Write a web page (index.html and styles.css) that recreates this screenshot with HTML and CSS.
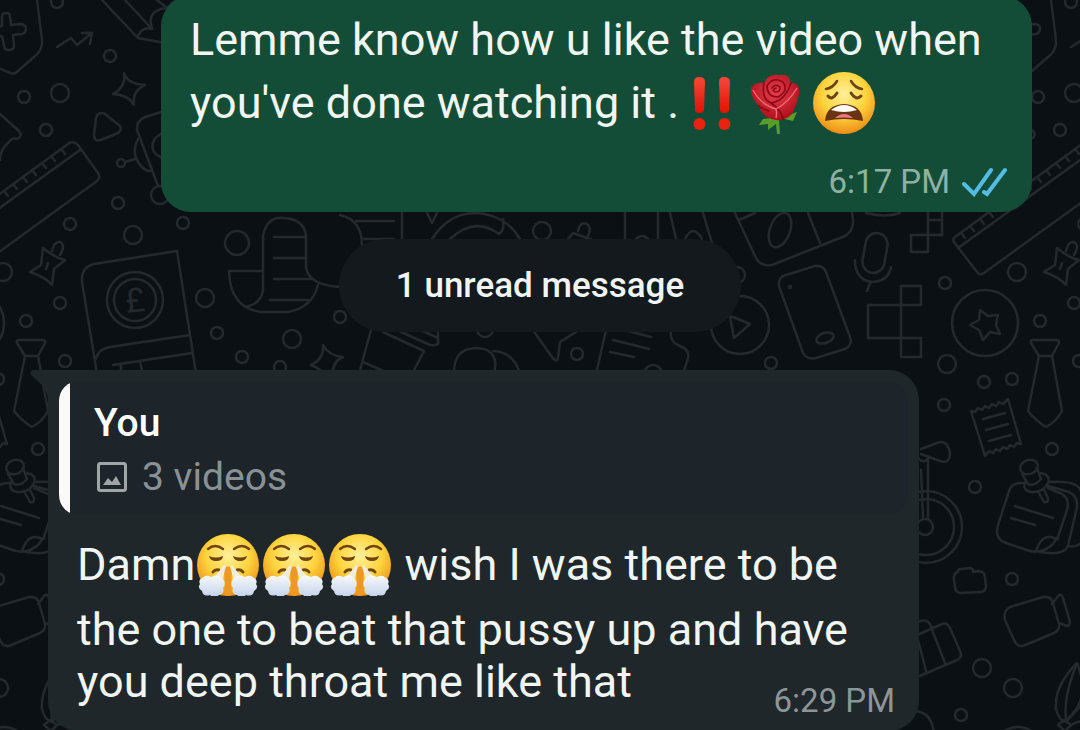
FILE: index.html
```html
<!DOCTYPE html>
<html lang="en">
<head>
    <meta charset="UTF-8">
    <meta name="viewport" content="width=device-width, initial-scale=1.0">
    <title>Chat</title>
    <link rel="stylesheet" href="styles.css">
</head>
<body>
    <!-- Shared drawings -->
    <svg class="defs" width="0" height="0" aria-hidden="true">
        <defs>
            <radialGradient id="faceFill" cx="50%" cy="35%" r="65%">
                <stop offset="0" stop-color="#fff09a"/>
                <stop offset="0.55" stop-color="#fdd43c"/>
                <stop offset="1" stop-color="#ee8d17"/>
            </radialGradient>
            <linearGradient id="redFill" x1="0" y1="0" x2="0" y2="1">
                <stop offset="0" stop-color="#f5483a"/>
                <stop offset="1" stop-color="#df1204"/>
            </linearGradient>
            <radialGradient id="roseFill" cx="50%" cy="40%" r="60%">
                <stop offset="0" stop-color="#e4404c"/>
                <stop offset="1" stop-color="#b00c1b"/>
            </radialGradient>
            <linearGradient id="steamFill" x1="0" y1="0" x2="0" y2="1">
                <stop offset="0" stop-color="#f8fafd"/>
                <stop offset="1" stop-color="#c3d2ea"/>
            </linearGradient>
        </defs>
        <symbol id="steamFace" viewBox="0 0 62 62">
            <circle cx="31" cy="31" r="31" fill="url(#faceFill)"/>
            <g fill="none" stroke="#70430f" stroke-width="2" stroke-linecap="round">
                <path d="M11 15Q18 9 26 15M37 15Q45 9 52 15" stroke-width="2.4"/>
                <path d="M16 38Q18 35 22 36M46 38Q44 35 40 36" stroke-width="3"/>
            </g>
            <path d="M12 22Q19 25 26 22Q26 27 19 27Q13 27 12 22zM36 22Q43 25 50 22Q49 27 43 27Q37 27 36 22z" fill="#70430f"/>
            <path d="M27 34Q31 31 35 34L34 61Q31 63 28 61z" fill="#ed9824"/>
            <path d="M27 31L29 33L25 46L15 46zM35 31L33 33L37 46L47 46z" fill="#edf0f5" opacity="0.85"/>
            <path d="M5 44Q9 40 14 43Q21 39 25 44Q30 49 26 54Q28 60 22 61Q17 65 13 61Q6 63 5 57Q0 54 3 50Q1 46 5 44z" fill="url(#steamFill)"/>
            <path d="M57 44Q53 40 48 43Q41 39 37 44Q32 49 36 54Q34 60 40 61Q45 65 49 61Q56 63 57 57Q62 54 59 50Q61 46 57 44z" fill="url(#steamFill)"/>
        </symbol>
        <symbol id="wearyFace" viewBox="0 0 62 62">
            <circle cx="31" cy="31" r="31" fill="url(#faceFill)"/>
            <g fill="none" stroke="#70430f" stroke-width="2.6" stroke-linecap="round">
                <path d="M13 17Q20 16 24 9M38 9Q42 16 49 17"/>
                <path d="M15 24Q19 29 24 21M38 21Q43 29 48 24" stroke-width="3"/>
            </g>
            <path d="M12 49Q13 33 31 32Q49 33 50 49Q31 45 12 49z" fill="#6b3312"/>
            <path d="M18 38Q31 28 44 38Q31 42 18 38z" fill="#fffaf2"/>
            <path d="M22 46Q31 38 40 46Q31 45 22 46z" fill="#e9788b"/>
        </symbol>
        <symbol id="rose" viewBox="0 0 62 62">
            <path d="M26 46L32 48L33 62L30 62L29 52L21 58L21 52L12 53L16 47zM34 46L50 40L46 49L38 47z" fill="#589d2b"/>
            <path d="M4 16Q8 10 17 11Q21 1 33 3Q42 1 44 11Q54 11 52 22Q50 32 45 42Q38 49 29 48Q15 46 12 34Q3 25 4 16z" fill="url(#roseFill)"/>
            <g fill="none" stroke="#8b0815" stroke-width="1.6" stroke-linecap="round">
                <path d="M17 11Q14 27 24 31Q38 29 44 11"/>
                <path d="M20 14Q26 4 36 10Q42 19 31 25Q20 25 20 14z"/>
                <path d="M25 16Q28 11 33 15Q34 20 28 20Q24 18 29 16"/>
                <path d="M24 31Q34 38 36 47M12 34Q16 37 22 39"/>
            </g>
            <path d="M6 18Q14 33 29 37Q42 30 50 16M29 37Q30 42 29 46" fill="none" stroke="#ef7278" stroke-width="1.3"/>
        </symbol>
        <symbol id="doubleBang" viewBox="0 0 62 62">
            <path d="M13 10Q13 5 18 5Q24 5 24 10L23 38Q23 41 18 41Q14 41 14 38zM38 10Q38 5 43 5Q49 5 49 10L48 38Q48 41 43 41Q39 41 39 38z" fill="url(#redFill)"/>
            <circle cx="18.500" cy="52" r="6" fill="#e8230f"/>
            <circle cx="43.500" cy="52" r="6" fill="#e8230f"/>
        </symbol>
        <g id="doodles">
            <path d="M37 0L42 40Q43 50 34 57L18 71Q14 75 10 73L-6 66"/>
            <path d="M2 17Q2 13 6 13Q10 13 10 17L11 25L20 24Q25 24 26 28Q26 33 22 34L13 35L14 46Q14 50 9 50Q4 50 4 46L2 36L-8 37L-9 28L2 26z"/>
            <path d="M57 47L71 38L77 45L92 33M82 33L92 33L90 44"/>
            <path d="M124 73Q127 84 145 85Q132 91 134 105Q129 95 113 94Q126 87 124 73z"/>
            <path d="M96 118Q98 111 105 114L119 125Q123 129 118 133L101 140Q94 142 94 135z"/>
            <path d="M0 114L19 131Q23 136 17 139Q12 137 8 143Q0 150 0 160"/>
            <path d="M-59 237L68 144Q73 140 78 145L98 173Q101 177 97 181L-30 273Q-34 276 -37 272L-60 242Q-62 239 -59 237zM-56 248L80 150"/>
            <path d="M61 149l4 5M51 156l4 5M42 163l4 5M32 170l4 5M23 177l4 5M13 184l4 5M4 191l4 5M-6 198l4 5M-15 205l4 5M-25 212l4 5M-34 219l4 5M-44 226l4 5M-53 233l4 5"/>
            <path d="M102 0L138 38L165 43M125 0L152 29M138 36Q143 26 152 29M152 28Q146 10 167 8M157 0L167 8L175 0"/>
            <path d="M165 111L145 117Q136 121 137 130L158 186M138 139Q130 155 142 167Q146 171 150 171M125 162L135 159M164 132Q148 140 154 152Q158 157 164 158"/>
            <path d="M43 248Q55 258 65 260L54 269L52 285Q45 277 30 272L41 265zM52 251Q54 241 60 242Q66 245 60 255M48 263L46 269"/>
            <path d="M98 380L82 282Q81 267 94 264L177 251L197 380M96 359Q98 349 110 347L190 335M113 365L192 353M121 364v10M140 361l2 10"/>
            <circle cx="135" cy="300" r="28"/><circle cx="135" cy="300" r="21"/>
            <path d="M19 340Q16 340 17 343L25 356L38 356L45 343Q46 340 42 340zM25 356L14 411Q22 421 32 427Q42 422 48 411L38 356"/>
            <path d="M263 290V236Q267 216 284 218Q304 219 306 236V268Q310 286 342 287M263 271H229Q230 308 261 312H288Q312 308 318 285M263 290Q261 304 245 307"/>
            <path d="M274 237h31M274 258h31M274 279h37M270 300h38M356 221h38M364 239h30"/>
            <path d="M323 345Q329 356 343 357Q333 361 332 375M323 345Q324 359 311 365Q322 369 323 375"/>
            <path d="M340 215Q362 220 362 245M402 213v26M427 213l5 10l5-10M432 239Q449 213 475 213Q505 214 520 239M450 239Q475 216 499 234Q505 230 503 219"/>
            <path d="M568 239l5-6L595 241M578 231Q580 221 587 224Q592 228 588 236M625 213v26M658 213v26M636 239Q642 233 648 239M670 213l7 30M703 213l9 30M685 239Q693 223 702 239"/>
            <path d="M371 330L359 374M383 332L424 351L412 374M397 330L430 345Q440 347 438 338L395 318M363 362L390 374M438 330v14"/>
            <path d="M454 374Q453 348 477 348Q500 349 494 374M493 351Q514 352 520 374M530 326L552 357Q557 364 558 357L560 342L576 332M606 330L596 374M613 340l36 9M610 352l24 5M628 331l23 6M671 330Q669 342 680 346Q690 350 688 358L683 374"/>
            <path d="M730 317Q730 316 733 317L750 324L734 338zM735 213L755 256Q760 267 772 265L845 236Q856 230 852 213M739 220L755 213M808 213L820 243M866 213Q886 218 900 213"/>
            <circle cx="740" cy="325" r="29"/>
            <ellipse cx="780" cy="230" rx="10" ry="18" transform="rotate(20 780 230)"/>
            <path d="M779 286Q778 277 786 275L815 266Q823 265 826 272L850 337Q853 345 845 349L816 358Q807 360 803 353z"/>
            <circle cx="790" cy="287" r="1"/>
            <ellipse cx="825" cy="338" rx="9" ry="5" transform="rotate(-18 825 338)"/>
            <rect x="864" y="233" width="22" height="40" rx="11" transform="rotate(10 875 253)"/>
            <path d="M855 260Q855 280 872 282Q889 281 891 267M870 283L867 291"/>
            <path d="M911 235h17v17h-17zM928 205v30h14v-30M928 220h14M901 286h20v19h-20zM901 305h-33v33h33zM901 338h20v19h-20z"/>
            <circle cx="985" cy="323" r="33"/>
            <path d="M980 310L988 316L998 315L996 325L1000 334L990 332L983 340L979 330L970 325L979 320z"/>
            <path d="M971 411l4 1l3-4l4 2l3-4l4 2l3-4l4 2l3-4l4 2l5-5L1021 444l-4-1l-3 4l-4-2l-3 4l-4-2l-3 4l-4-2l-3 4l-4-2l-4 5zM983 419l22-6M986 430l22-6M989 441l22-6"/>
            <path d="M921 449L940 442Q948 441 950 453Q950 464 940 461L921 454M918 458Q924 465 929 457M928 457v62M921 470l2 48"/>
            <circle cx="926" cy="527" r="36"/><circle cx="926" cy="527" r="28"/><circle cx="925" cy="527" r="8"/>
            <path d="M1024 483Q1012 482 1009 491L998 525Q994 539 1006 543L1030 551Q1041 554 1052 545L1058 537L1067 510Q1070 499 1062 494L1048 488M1036 551Q1041 536 1050 537L1058 539M1040 552Q1064 556 1068 546L1077 507Q1078 496 1069 492L1048 486M1050 482Q1075 480 1080 489L1092 515Q1087 550 1068 546M1015 506l38 12M1011 518l24 7"/>
            <ellipse cx="1029" cy="467" rx="9" ry="7" transform="rotate(-20 1029 467)"/>
            <path d="M1022 474l6 10Q1034 487 1041 479L1037 468M1026 480Q1021 490 1031 492Q1043 493 1048 483Q1051 475 1041 473M1039 493l5 9Q1049 503 1048 498L1044 490"/>
            <path d="M954 580Q953 573 958 572Q957 569 961 569L970 568Q974 569 973 572L979 571Q985 572 985 577L986 587Q985 592 980 592L960 593Q955 592 955 587z"/>
            <path d="M1010 607L1043 597Q1051 596 1053 603L1059 624Q1060 630 1054 633L1023 646Q1017 647 1014 640L1005 620Q1003 611 1010 607zM1052 604L1059 595Q1062 594 1063 598L1070 622Q1070 626 1067 626L1059 623"/>
            <path d="M915 636L942 624Q947 622 950 628L960 651Q963 657 957 660L915 678M931 627L945 663M918 640l8 31M918 622Q928 617 932 628M915 711Q932 712 934 734"/>
            <path d="M1077 663Q1054 686 1056 709Q1059 721 1066 722M1077 663Q1063 697 1066 720Q1092 700 1077 663M1066 722L1085 701M1064 720l7 5-6 6-7-6zM1070 726Q1080 718 1090 724M1000 734Q1018 720 1036 734"/>
            <g class="dots">
                <circle cx="57" cy="2" r="6"/><circle cx="110" cy="56" r="6"/><circle cx="24" cy="97" r="6"/><circle cx="60" cy="93" r="9"/>
                <circle cx="46" cy="130" r="6"/><circle cx="121" cy="163" r="4"/><circle cx="160" cy="195" r="9"/><circle cx="118" cy="203" r="6"/>
                <circle cx="70" cy="224" r="6"/><circle cx="133" cy="235" r="9"/><circle cx="183" cy="223" r="6"/><circle cx="3" cy="272" r="9"/>
                <circle cx="237" cy="243" r="12"/><circle cx="60" cy="303" r="6"/><circle cx="26" cy="321" r="6"/><circle cx="65" cy="361" r="6"/>
                <circle cx="205" cy="298" r="9"/><circle cx="217" cy="333" r="6"/><circle cx="242" cy="357" r="6"/><circle cx="292" cy="339" r="9"/>
                <circle cx="340" cy="317" r="6"/><circle cx="280" cy="367" r="6"/><circle cx="542" cy="231" r="9"/><circle cx="485" cy="329" r="8"/>
                <circle cx="577" cy="354" r="6"/><circle cx="653" cy="374" r="9"/><circle cx="737" cy="275" r="8"/><circle cx="771" cy="363" r="6"/>
                <circle cx="945" cy="283" r="6"/><circle cx="947" cy="364" r="9"/><circle cx="984" cy="382" r="6"/><circle cx="1012" cy="379" r="6"/>
                <circle cx="944" cy="405" r="6"/><circle cx="1052" cy="449" r="6"/><circle cx="975" cy="487" r="6"/><circle cx="1012" cy="579" r="6"/>
                <circle cx="982" cy="668" r="9"/><circle cx="1013" cy="688" r="9"/><circle cx="961" cy="715" r="6"/>
            </g>
        </g>
    </svg>

    <main class="chat">
        <svg class="wallpaper" viewBox="0 0 1080 730" preserveAspectRatio="xMinYMin slice" aria-hidden="true">
            <use href="#doodles"/>
            <use href="#doodles" x="-1014"/>
            <use href="#doodles" x="1014"/>
            <text x="125" y="312" transform="rotate(-6 135 300)">£</text>
        </svg>

        <article class="bubble bubble-out">
            <p class="message">Lemme know how u like the video when you've done watching it .<svg class="emoji" role="img" aria-label="‼️"><use href="#doubleBang"/></svg><svg class="emoji" role="img" aria-label="🌹"><use href="#rose"/></svg><svg class="emoji" role="img" aria-label="😩"><use href="#wearyFace"/></svg></p>
            <div class="meta">
                <time datetime="18:17">6:17 PM</time>
                <svg class="ticks" viewBox="0 0 46 30" role="img" aria-label="Read">
                    <path d="M2 17L12 27L29 3M22 25L25 27L43 3"/>
                </svg>
            </div>
        </article>

        <div class="unread">1 unread message</div>

        <article class="bubble bubble-in">
            <svg class="tail" viewBox="0 0 20 40" aria-hidden="true">
                <path d="M4 0H20V40Q20 24 14 16L2 5Q0 1 4 0z"/>
            </svg>
            <blockquote class="quote">
                <strong class="quote-name">You</strong>
                <div class="quote-media">
                    <svg class="media-icon" viewBox="0 0 32 32" aria-hidden="true">
                        <rect x="2.500" y="2.500" width="27" height="27" rx="2"/>
                        <path d="M7 24L12 17L16 21L20 15L25 24z"/>
                    </svg>
                    <span>3 videos</span>
                </div>
            </blockquote>
            <p class="message">Damn<svg class="emoji" role="img" aria-label="😤"><use href="#steamFace"/></svg><svg class="emoji" role="img" aria-label="😤"><use href="#steamFace"/></svg><svg class="emoji" role="img" aria-label="😤"><use href="#steamFace"/></svg> wish I was there to be the one to beat that pussy up and have you deep throat me like that <time class="meta-inline" datetime="18:29">6:29 PM</time></p>
        </article>
    </main>
</body>
</html>
```
FILE: styles.css
```css
* {
    margin: 0;
    padding: 0;
    box-sizing: border-box;
}

body {
    font-family: Roboto, "Liberation Sans", sans-serif;
    background: #0b1014;
    color: #f1f5f4;
}

.defs {
    position: absolute;
}

.chat {
    position: relative;
    z-index: 0;
    display: flex;
    flex-direction: column;
    height: 100vh;
    padding: 0 48px;
    overflow: hidden;
}

/* Doodle wallpaper behind the messages */
.wallpaper {
    position: absolute;
    inset: 0;
    z-index: -1;
    width: 100%;
    height: 100%;
    fill: none;
    stroke: #23292d;
    stroke-width: 2.5;
    stroke-linecap: round;
    stroke-linejoin: round;
}

.wallpaper text {
    font-size: 34px;
    fill: #23292d;
    stroke: none;
}

.bubble {
    position: relative;
    flex: none;
    width: calc(100% - 113px);
    padding: 18px 29px 10px;
    border-radius: 30px;
}

.bubble-out {
    align-self: flex-end;
    margin-top: -4px;
    background: #144d37;
}

.bubble-in {
    align-self: flex-start;
    padding-top: 11px;
    background: #1f272a;
    border-top-left-radius: 0;
}

.tail {
    position: absolute;
    top: 0;
    left: -19px;
    width: 20px;
    height: 40px;
    fill: #1f272a;
}

.message {
    display: flow-root;
    font-size: 45px;
    line-height: 52px;
}

.emoji {
    width: 62px;
    height: 62px;
    margin: 6px 2px 8px;
    vertical-align: -24px;
}

.meta {
    display: flex;
    justify-content: flex-end;
    align-items: center;
    gap: 12px;
    margin: 20px -5px 0 0;
    font-size: 33px;
    line-height: 40px;
    color: #8fb0a2;
}

/* The time shares the last line of the text */
.meta-inline {
    float: right;
    margin: 25px -5px 0 0;
    font-size: 33px;
    line-height: 40px;
    color: #8d9598;
}

.ticks {
    width: 46px;
    height: 30px;
    fill: none;
    stroke: #53bce3;
    stroke-width: 4;
    stroke-linecap: round;
}

.unread {
    flex: none;
    align-self: center;
    margin: 27px 0 38px;
    padding: 0 57px;
    border-radius: 47px;
    background: #13191d;
    font-size: 35px;
    font-weight: 500;
    line-height: 93px;
}

.quote {
    margin: 0 -18px 13px;
    padding: 17px 35px 9px;
    border-radius: 20px;
    background: linear-gradient(to right, #fafafa 11px, #1d242a 11px);
}

.quote-name {
    display: block;
    font-size: 39px;
    font-weight: 500;
    line-height: 50px;
    color: #fff;
}

.quote-media {
    display: flex;
    align-items: center;
    gap: 12px;
    font-size: 39px;
    line-height: 58px;
    color: #8a9196;
}

.media-icon {
    width: 36px;
    height: 32px;
    fill: #a0a5a7;
}

.media-icon rect {
    fill: none;
    stroke: #a0a5a7;
    stroke-width: 3;
}
```
